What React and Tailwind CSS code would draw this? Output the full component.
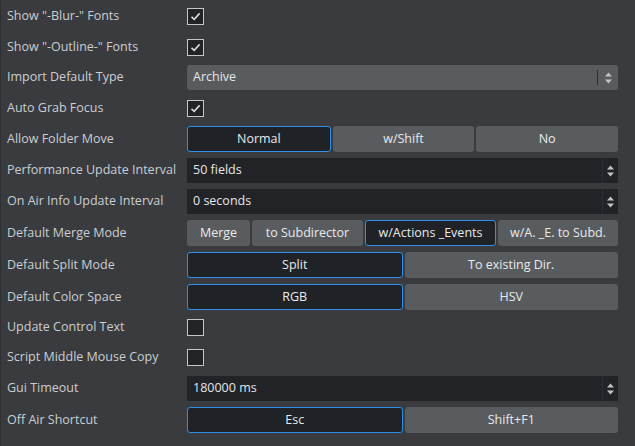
import React from "react";

const font = { fontFamily: '"Open Sans", "Noto Sans", sans-serif' };

function Check({ checked }) {
  return (
    <div className="w-[17px] h-[17px] border border-[#c4c6c8] bg-[#212327] flex items-center justify-center">
      {checked && (
        <svg width="13" height="13" viewBox="0 0 13 13">
          <path d="M2.5 6.8 L5.2 9.4 L10.6 3.4" fill="none" stroke="#d8dadc" strokeWidth="1.6" />
        </svg>
      )}
    </div>
  );
}

function Arrows() {
  return (
    <svg width="9" height="14" viewBox="0 0 9 14">
      <path d="M4.5 1.5 L8 5.5 L1 5.5 Z" fill="#c2c4c6" />
      <path d="M4.5 12.5 L8 8.5 L1 8.5 Z" fill="#c2c4c6" />
    </svg>
  );
}

function Combo({ value }) {
  return (
    <div className="flex-1 h-full bg-[#595c5f] rounded-[3px] flex items-center text-[12.5px] text-[#e4e6e8]">
      <span className="pl-[6px] flex-1">{value}</span>
      <div className="w-px h-[15px] bg-[#2c2e31]" />
      <div className="w-[20px] flex justify-center">
        <Arrows />
      </div>
    </div>
  );
}

function Spin({ value }) {
  return (
    <div className="flex-1 h-full bg-[#212327] flex items-center text-[12.5px] text-[#e4e6e8]">
      <span className="pl-[6px] flex-1">{value}</span>
      <div className="w-px h-full bg-[#2b2e32]" />
      <div className="w-[15px] flex justify-center">
        <Arrows />
      </div>
    </div>
  );
}

function Seg({ items, active, widths }) {
  return (
    <div className="flex-1 h-full flex gap-[2px]">
      {items.map((it, i) => (
        <div
          key={it}
          className={
            (widths ? widths[i] : "flex-1") +
            " h-full rounded-[3px] flex items-center justify-center text-[12.5px] text-[#e8eaec] " +
            (i === active
              ? "bg-[#1f2226] border border-[#2f8fe6]"
              : "bg-[#595c5f]")
          }
        >
          {it}
        </div>
      ))}
    </div>
  );
}

const rows = [
  { label: 'Show "-Blur-" Fonts', mt: "mt-[4px]", h: "h-[25px]", c: <Check checked /> },
  { label: 'Show "-Outline-" Fonts', mt: "mt-[6px]", h: "h-[25px]", c: <Check checked /> },
  { label: "Import Default Type", mt: "mt-[5px]", h: "h-[25px]", c: <Combo value="Archive" /> },
  { label: "Auto Grab Focus", mt: "mt-[6px]", h: "h-[25px]", c: <Check checked /> },
  { label: "Allow Folder Move", mt: "mt-[5px]", h: "h-[26px]", c: <Seg items={["Normal", "w/Shift", "No"]} active={0} /> },
  { label: "Performance Update Interval", mt: "mt-[6px]", h: "h-[25px]", c: <Spin value="50 fields" /> },
  { label: "On Air Info Update Interval", mt: "mt-[6px]", h: "h-[25px]", c: <Spin value="0 seconds" /> },
  {
    label: "Default Merge Mode",
    mt: "mt-[6px]",
    h: "h-[26px]",
    c: (
      <Seg
        items={["Merge", "to Subdirector", "w/Actions _Events", "w/A. _E. to Subd."]}
        active={2}
        widths={["w-[63px]", "w-[111px]", "w-[131px]", "flex-1"]}
      />
    ),
  },
  { label: "Default Split Mode", mt: "mt-[6px]", h: "h-[26px]", c: <Seg items={["Split", "To existing Dir."]} active={0} /> },
  { label: "Default Color Space", mt: "mt-[6px]", h: "h-[26px]", c: <Seg items={["RGB", "HSV"]} active={0} /> },
  { label: "Update Control Text", mt: "mt-[5px]", h: "h-[25px]", c: <Check /> },
  { label: "Script Middle Mouse Copy", mt: "mt-[5px]", h: "h-[25px]", c: <Check /> },
  { label: "Gui Timeout", mt: "mt-[6px]", h: "h-[25px]", c: <Spin value="180000 ms" /> },
  { label: "Off Air Shortcut", mt: "mt-[6px]", h: "h-[26px]", c: <Seg items={["Esc", "Shift+F1"]} active={0} /> },
];

export default function App() {
  return (
    <div style={font} className="w-[635px] h-[446px] bg-[#393b3f] flex overflow-hidden">
      <div className="w-px bg-[#2e3033]" />
      <div className="w-[620px] flex flex-col">
        {rows.map((r) => (
          <div key={r.label} className={r.mt + " " + r.h + " flex items-center"}>
            <div className="w-[186px] pl-[6px] text-[12.5px] text-[#cbced1] whitespace-nowrap">{r.label}</div>
            <div className="flex-1 h-full flex items-center pr-[3px]">{r.c}</div>
          </div>
        ))}
      </div>
    </div>
  );
}
